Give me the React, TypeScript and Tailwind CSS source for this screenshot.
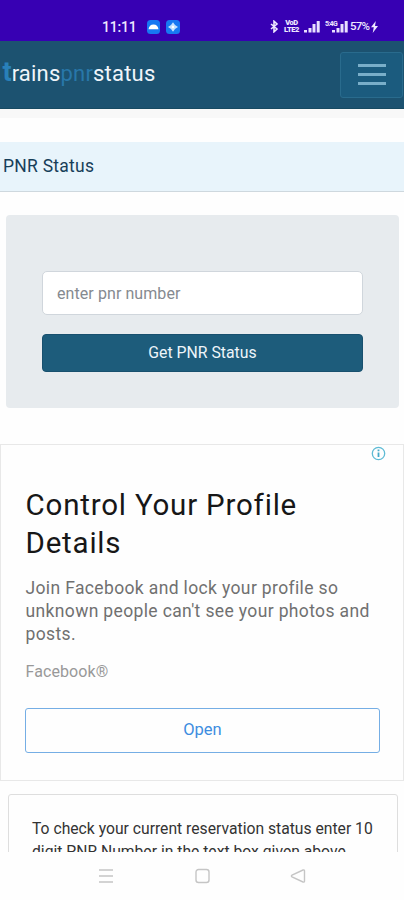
import React from "react";

function Signal() {
  return (
    <svg width="16" height="13" viewBox="0 0 16 13" fill="#e9e0ff">
      <rect x="0" y="10" width="3" height="2.5" />
      <rect x="4.5" y="8" width="3" height="4.5" />
      <rect x="8.5" y="4" width="3" height="8.5" />
      <rect x="12.7" y="1" width="3" height="11.5" />
    </svg>
  );
}

function StatusBar() {
  return (
    <div className="flex h-[41px] shrink-0 items-center bg-[#3700b3] pt-[12px] pl-[102px] text-[#eee8ff]">
      <span className="w-[45px] text-[14px] leading-none font-medium tracking-[-0.2px]">11:11</span>
      <svg className="shrink-0" width="35" height="14" viewBox="0 0 35 14">
        <rect x="0" y="0" width="13" height="14" rx="3.5" fill="#1778f2" />
        <path d="M1.5 9.2Q2.2 4.6 6.5 4.4Q10.8 4.6 11.5 9.2Z" fill="#fff" />
        <rect x="19" y="0" width="14" height="14" rx="3.5" fill="#1778f2" />
        <path d="M26 2.2l2 2.8 3 2-3 2-2 2.8L24 9l-3-2 3-2z" fill="#c4e2ff" />
        <circle cx="26" cy="7" r="1.2" fill="#fff" />
      </svg>
      <div className="ml-[88px] flex items-center">
        <svg width="9" height="13" viewBox="0 0 9 13" fill="none" stroke="#eee8ff" strokeWidth="1.6">
          <path d="M1 4l6 5-3 2.8V1.2L7 4 1 9" />
        </svg>
        <span className="ml-[5px] flex w-[15px] flex-col text-center text-[7.5px] leading-[6.5px] font-black tracking-[-0.4px]">
          <span>VoD</span>
          <span>LTE2</span>
        </span>
        <span className="ml-[5px]"><Signal /></span>
        <span className="ml-[5px] w-[10px] self-start text-[7px] leading-[8px] font-bold tracking-[-0.7px]">5:4G</span>
        <span className="-ml-[3px]"><Signal /></span>
        <span className="ml-[2px] w-[20px] text-[11.5px] leading-none font-medium tracking-[-0.8px]">57%</span>
        <svg width="9" height="12" viewBox="0 0 9 12" fill="#eee8ff">
          <path d="M5.8 0L1 6.3h2.8L2.7 12 8 5H5z" />
        </svg>
      </div>
    </div>
  );
}

function Header() {
  return (
    <header className="flex h-[68px] shrink-0 items-center justify-between border-b border-[#174a62] bg-[#1c5270] pl-[2.5px]">
      <div className="flex items-baseline pb-[5px] text-[22px] leading-none whitespace-nowrap text-[#f0f5fa]">
        <span className="text-[27px] font-bold text-[#2980b9]">t</span>
        <span className="tracking-[0.2px]">rains</span>
        <span className="tracking-[0.2px] text-[#2877a9]">pnr</span>
        <span className="tracking-[0.2px]">status</span>
      </div>
      <button className="mr-px flex h-[46px] w-[63px] flex-col items-center justify-center gap-[6px] rounded-[3px] border border-[#296b8d] bg-[#1b5b7e]">
        <span className="h-[3px] w-[28px] bg-[#79aec9]" />
        <span className="h-[3px] w-[28px] bg-[#79aec9]" />
        <span className="h-[3px] w-[28px] bg-[#79aec9]" />
      </button>
    </header>
  );
}

export default function App() {
  return (
    <div className="flex h-[900px] w-[404px] flex-col overflow-hidden bg-[#fefefe] font-[Roboto,sans-serif]">
      <StatusBar />
      <Header />
      <div className="h-[9px] shrink-0 bg-[#f8f8f8]" />
      <main className="min-h-0 flex-1 overflow-hidden pt-[24px]">
        <h1 className="flex h-[50px] items-center border-b border-[#ced8de] bg-[#e8f4fb] pl-[3px] text-[17.5px] tracking-[0.25px] text-[#173e59]">
          PNR Status
        </h1>
        <section className="mx-[6px] mt-[23px] mr-[5px] h-[193px] rounded-[4px] bg-[#e7ebee] px-[36px] pt-[56px]">
          <input
            aria-label="pnr number"
            placeholder="enter pnr number"
            className="block h-[44px] w-[321px] rounded-[5px] border border-[#d0d6dc] bg-white px-[14px] text-[16px] tracking-[0.08px] placeholder:text-[#858a90]"
          />
          <button className="mt-[19px] flex h-[38px] w-[321px] items-center justify-center rounded-[4px] border border-[#18506e] bg-[#1d5c7b] text-[15.8px] text-[#edf5fa]">
            Get PNR Status
          </button>
        </section>
        <section className="mt-[36px] h-[337px] border border-[#e8e8e8] px-[24px]">
          <div className="flex h-[41px] justify-end pt-px">
            <svg className="-mr-[7px]" width="15" height="15" viewBox="0 0 15 15" fill="none">
              <circle cx="7.5" cy="7.5" r="6.2" stroke="#5ebbd5" strokeWidth="1.3" />
              <path d="M7.5 6.6v4.4M7.5 3.5v1.7" stroke="#45a9c8" strokeWidth="1.8" />
            </svg>
          </div>
          <h2 className="pl-[0.5px] text-[29.5px] leading-[38px] tracking-[0.8px] whitespace-nowrap text-[#171717]">
            Control Your Profile
            <br />
            Details
          </h2>
          <p className="mt-[15px] pl-[0.5px] text-[17.5px] leading-[23px] tracking-[0.36px] whitespace-nowrap text-[#707070]">
            Join Facebook and lock your profile so
            <br />
            unknown people can't see your photos and
            <br />
            posts.
          </p>
          <p className="mt-[15px] pl-[0.5px] text-[16px] leading-[22px] tracking-[0.1px] text-[#999]">Facebook®</p>
          <button className="mt-[25px] flex h-[45px] w-[355px] items-center justify-center rounded-[3px] border-[1.5px] border-[#75aee5] text-[16.5px] text-[#3d8de0]">
            Open
          </button>
        </section>
        <section className="mt-[13px] mr-[6px] ml-[8px] h-[100px] rounded-t-[3px] border border-[#dedede] pt-[22px] pl-[23px] text-[15.7px] leading-[23px] whitespace-nowrap text-[#333]">
          To check your current reservation status enter 10
          <br />
          digit PNR Number in the text box given above.
        </section>
      </main>
      <nav className="h-[48px] shrink-0 bg-[#fefefe] pt-[16px] pl-[98px]">
        <svg width="210" height="16" viewBox="0 0 210 16" fill="none" stroke="#c5c5c5" strokeWidth="1.4">
          <path d="M1 2h14M1 8h14M1 14h14" />
          <rect x="98" y="1.5" width="13" height="13" rx="2.5" />
          <path d="M194 7.2l11-5.2q1.5-.4 1.5 1v10q0 1.4-1.5 1l-11-5.2q-1.2-.8 0-1.6z" />
        </svg>
      </nav>
    </div>
  );
}
